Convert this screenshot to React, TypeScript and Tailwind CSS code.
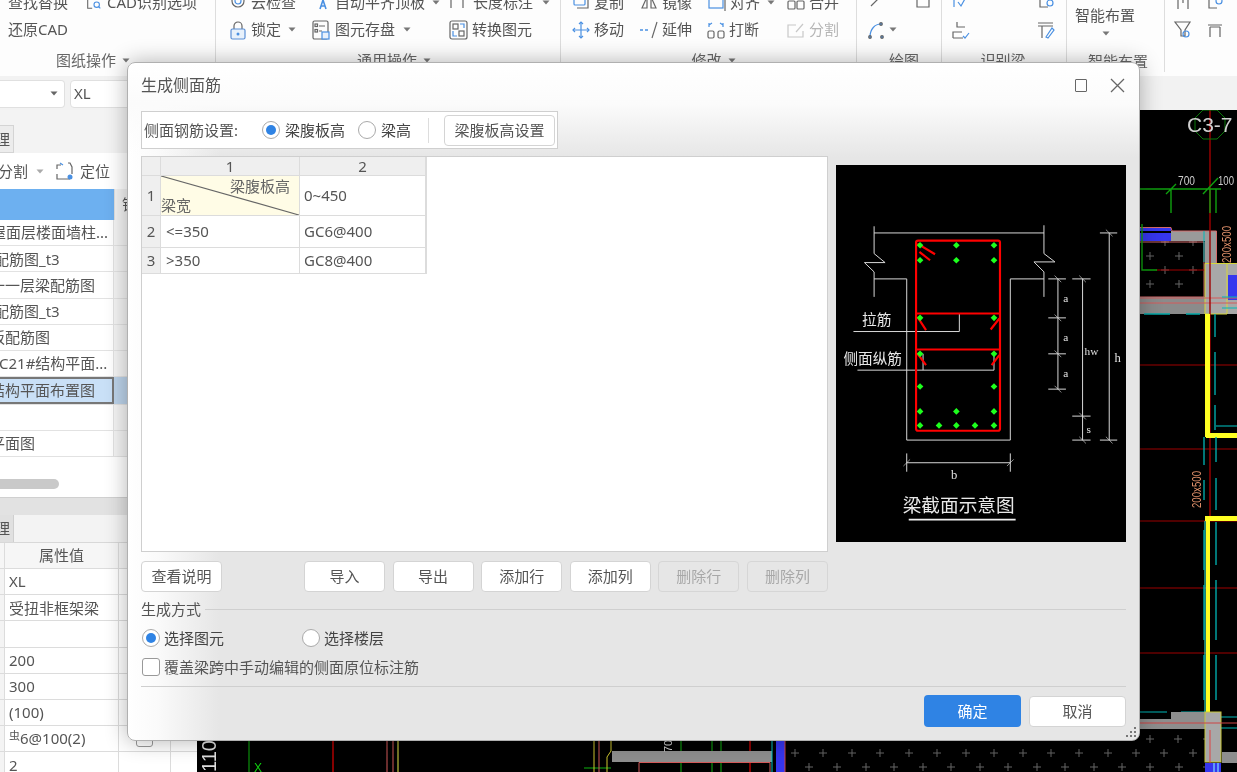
import React from "react";

const B = "#4a90e2";
const G = "#666";

function Ic({ children, w = 20 }: { children: React.ReactNode; w?: number }) {
  return (
    <svg width={w} height={20} viewBox="0 0 20 20" fill="none" stroke={G} strokeWidth={1.2} className="shrink-0">
      {children}
    </svg>
  );
}

function Caret({ c = "#777" }: { c?: string }) {
  return (
    <svg width="8" height="5" viewBox="0 0 8 5" className="shrink-0">
      <path d="M0.5 0.5H7.5L4 4.5Z" fill={c} />
    </svg>
  );
}

const icons: Record<string, React.ReactNode> = {
  cad: (<><path d="M8 4H3v13h5" /><circle cx="13" cy="13" r="3" stroke={B} /><path d="M15 15l2 2" stroke={B} /></>),
  cloud: (<><circle cx="10" cy="9" r="6" /><circle cx="10" cy="9" r="3" stroke={B} /></>),
  align: (<><path d="M3 3h2M8 3h2" stroke={G} /><path d="M8 17l3-9 3 9M9 14h4" stroke={B} strokeWidth={1.6} /></>),
  len: (<><path d="M3 2v14M15 2v14M15 3l-2 4M15 3l2 4" /></>),
  copy: (<><rect x="3" y="3" width="11" height="10" rx="1" stroke={B} /><path d="M6 16h11V7" /></>),
  mirror: (<><path d="M3 16L8 5v11zM17 16L12 5v11z" /></>),
  alignR: (<><rect x="2" y="6" width="14" height="10" stroke={B} /><path d="M18 2v17" /></>),
  merge: (<><rect x="2" y="9" width="7" height="8" rx="1" /><rect x="11" y="9" width="7" height="8" rx="1" /><path d="M5 3h10" stroke={B} /></>),
  lock: (<><path d="M6 9V6a4 4 0 018 0v3" /><rect x="3" y="9" width="14" height="10" rx="1.5" stroke="#5b8fd6" fill="#e8f1fb" /><circle cx="10" cy="14" r="1.5" fill="#4a90e2" stroke="none" /></>),
  save: (<><rect x="2" y="1" width="15" height="18" rx="1.5" /><path d="M8 6h6M8 11h3" /><rect x="4" y="4" width="2.5" height="2.5" /><rect x="4" y="9.5" width="2.5" height="2.5" /><rect x="11" y="12" width="7" height="7" stroke={B} fill="#e8f1fb" /></>),
  conv: (<><rect x="2" y="1" width="17" height="18" rx="2" /><rect x="5" y="4" width="5" height="5" /><rect x="11" y="11" width="5" height="5" /><path d="M12 4h4v4M5 11v5h4" stroke={B} /></>),
  move: (<><path d="M10 2v16M2 10h16" stroke={B} /><path d="M8 4l2-2 2 2M8 16l2 2 2-2M4 8l-2 2 2 2M16 8l2 2-2 2" stroke={B} /></>),
  ext: (<><path d="M1 10h3M6 10h3" stroke={B} strokeWidth={1.6} /><path d="M18 2l-5 16" /></>),
  brk: (<><rect x="2" y="11" width="6" height="7" rx="1.5" /><rect x="12" y="11" width="6" height="7" rx="1.5" /><path d="M3 3v4M17 3v4M6 3l-3 2M14 3l3 2" stroke={B} /></>),
  split: (<><path d="M10 5H2v12h15v-6" stroke="#c8c8c8" /><path d="M10 12l7-8" stroke="#c8c8c8" /></>),
};

function RI({ ic, t, w, caret, gray, gap = 3 }: { ic: string; t: string; w: number; caret?: boolean; gray?: boolean; gap?: number }) {
  return (
    <div className="flex items-center shrink-0" style={{ width: w, gap }}>
      <Ic>{icons[ic]}</Ic>
      <span className={gray ? "text-[15px] text-[#b5b5b5] whitespace-nowrap" : "text-[15px] text-[#555] whitespace-nowrap"}>{t}</span>
      {caret && <span className="ml-[4px]"><Caret /></span>}
    </div>
  );
}

function Label({ t, caret = true }: { t: string; caret?: boolean }) {
  return (
    <div className="h-[20px] flex items-center justify-center gap-[6px] text-[15px] text-[#666] whitespace-nowrap mt-[7px]">
      {t}
      {caret && <Caret />}
    </div>
  );
}

function Ribbon() {
  return (
    <div className="h-[76px] shrink-0 bg-[#fdfdfd] flex overflow-hidden">
      <div className="w-[216px] h-[72px] border-r border-[#ddd] shrink-0 flex flex-col">
        <div className="h-[28px] -mt-[12px] flex items-center pl-[8px] gap-[17px]">
          <span className="text-[15px] text-[#555] whitespace-nowrap">查找替换</span>
          <Ic w={18}>{icons.cad}</Ic>
          <span className="text-[15px] text-[#555] whitespace-nowrap -ml-[13px]">CAD识别选项</span>
        </div>
        <div className="h-[27px] flex items-center pl-[8px] text-[15px] text-[#555]">还原CAD</div>
        <div className="pl-[56px] flex"><Label t="图纸操作" /></div>
      </div>
      <div className="w-[345px] h-[72px] border-r border-[#ddd] shrink-0 flex flex-col pl-[12px]">
        <div className="h-[28px] -mt-[12px] flex items-center">
          <RI ic="cloud" t="云检查" w={84} />
          <RI ic="align" t="自动平齐顶板" w={136} caret />
          <RI ic="len" t="长度标注" w={110} caret gap={5} />
        </div>
        <div className="h-[27px] flex items-center">
          <RI ic="lock" t="锁定" w={83} caret />
          <RI ic="save" t="图元存盘" w={137} caret gap={4} />
          <RI ic="conv" t="转换图元" w={100} gap={4} />
        </div>
        <Label t="通用操作" />
      </div>
      <div className="w-[296px] h-[72px] border-r border-[#ddd] shrink-0 flex flex-col pl-[10px]">
        <div className="h-[28px] -mt-[12px] flex items-center">
          <RI ic="copy" t="复制" w={68} />
          <RI ic="mirror" t="镜像" w={68} />
          <RI ic="alignR" t="对齐" w={79} caret />
          <RI ic="merge" t="合并" w={60} />
        </div>
        <div className="h-[27px] flex items-center">
          <RI ic="move" t="移动" w={68} />
          <RI ic="ext" t="延伸" w={67} />
          <RI ic="brk" t="打断" w={80} />
          <RI ic="split" t="分割" w={60} gray />
        </div>
        <Label t="修改" />
      </div>
      <div className="w-[85px] h-[72px] border-r border-[#ddd] shrink-0 flex flex-col pl-[10px]">
        <div className="h-[28px] -mt-[12px] flex items-center gap-[26px]">
          <Ic><path d="M4 14L15 3" stroke={G} /></Ic>
          <Ic><path d="M4 4v11h12V4" /></Ic>
        </div>
        <div className="h-[27px] flex items-center gap-[2px]">
          <Ic><path d="M3 17C3 9 8 4 14 4" stroke={B} /><circle cx="3" cy="17" r="1.3" fill={B} /><circle cx="14" cy="4" r="1.3" fill={B} /><circle cx="15" cy="17" r="1.3" fill={B} /></Ic>
          <Caret />
        </div>
        <Label t="绘图" caret={false} />
      </div>
      <div className="w-[125px] h-[72px] border-r border-[#ddd] shrink-0 flex flex-col pl-[8px] pr-[10px]">
        <div className="h-[28px] -mt-[12px] flex items-center justify-between">
          <Ic><path d="M4 3v12M8 10l3 4 5-9" stroke={B} /></Ic>
          <Ic><path d="M4 3v12h8" /><circle cx="14" cy="11" r="3" stroke={B} /></Ic>
        </div>
        <div className="h-[27px] flex items-center justify-between">
          <Ic><path d="M7 2v5h8M3 18h10M3 18v-6h9" stroke={G} /><path d="M13 16l2 2 4-5" stroke={B} /></Ic>
          <Ic><path d="M2 3h15M2 6h15M6 6v12" /><path d="M10 17l6-9 2 2-6 8z" stroke={B} /></Ic>
        </div>
        <Label t="识别梁" caret={false} />
      </div>
      <div className="w-[98px] h-[72px] border-r border-[#ddd] shrink-0 flex flex-col pl-[8px]">
        <div className="h-[5px]" />
        <div className="text-[15px] text-[#555] h-[20px] flex items-center whitespace-nowrap">智能布置</div>
        <div className="h-[16px] flex items-center pl-[27px]"><Caret /></div>
        <div className="h-[10px]" />
        <div className="text-[15px] text-[#666] h-[20px] flex items-center whitespace-nowrap pl-[13px]">智能布置</div>
      </div>
      <div className="flex-1 flex flex-col pl-[8px]">
        <div className="h-[28px] -mt-[12px] flex items-center gap-[12px]">
          <Ic><path d="M3 5h14M5 5v12M15 5v12M10 5v6" /></Ic>
          <Ic><path d="M4 4v12h8" /><circle cx="14" cy="9" r="3" stroke={B} /></Ic>
        </div>
        <div className="h-[27px] flex items-center gap-[12px]">
          <Ic><path d="M2 2h15l-5 8v6H8v-6z" /><circle cx="13" cy="14" r="3" stroke={B} /></Ic>
          <Ic><path d="M3 5h14M5 7h10M5 7v10M15 7v10" /></Ic>
        </div>
      </div>
    </div>
  );
}

const rows = [
  { t: "屋面层楼面墙柱...", cls: "-ml-[9px]" },
  { t: "配筋图_t3", cls: "-ml-[6px]" },
  { t: "一一层梁配筋图", cls: "-ml-[10px]" },
  { t: "配筋图_t3", cls: "-ml-[6px]" },
  { t: "板配筋图", cls: "-ml-[10px]" },
  { t: "C21#结构平面...", cls: "-ml-[1px]" },
  { t: "结构平面布置图", cls: "-ml-[10px]", sel: true },
  { t: "", cls: "" },
  { t: "平面图", cls: "-ml-[10px]" },
];

const props = ["XL", "受扭非框架梁", "", "200", "300", "(100)", "虫6@100(2)", "2"];

function LeftPanel() {
  return (
    <div className="w-[197px] shrink-0 bg-[#f3f3f3] flex flex-col text-[15px] text-[#555] overflow-hidden">
      <div className="h-[15px] shrink-0" />
      <div className="h-[28px] shrink-0 flex">
        <div className="w-[14px] bg-[#ececec] border border-l-0 border-[#d4d4d4] flex items-center overflow-hidden"><span className="-ml-[5px]">理</span></div>
      </div>
      <div className="h-[36px] shrink-0 bg-white flex items-center">
        <span className="-ml-[2px]">分割</span>
        <span className="ml-[8px]"><Caret c="#aaa" /></span>
        <span className="ml-[11px]">
          <Ic>
            <path d="M2 8V4h4M2 13v5h13M13 2h2l2 4v7" />
            <path d="M5 2l3 2" stroke={B} />
            <circle cx="15" cy="16" r="2.5" fill={B} stroke="none" />
          </Ic>
        </span>
        <span className="ml-[5px]">定位</span>
        <span className="ml-[14px]"><Ic><path d="M3 3h14M5 3v14h10" /></Ic></span>
      </div>
      <div className="h-[31px] shrink-0 flex bg-white">
        <div className="w-[114px] bg-[#6db0f0]" />
        <div className="flex-1 bg-[#f2f2f2] border-l border-[#ddd] flex items-center pl-[7px]">锁</div>
      </div>
      <div className="h-[237px] shrink-0 flex flex-col bg-white">
        {rows.map((r, i) => (
          <div key={i} className="flex-1 flex border-b border-[#e2e2e2]">
            <div className={r.sel ? "w-[114px] flex items-center overflow-hidden whitespace-nowrap bg-[#c9e0f7] border-2 border-l-0 border-[#777]" : "w-[114px] flex items-center overflow-hidden whitespace-nowrap border-r border-[#e2e2e2]"}>
              <span className={r.cls}>{r.t}</span>
            </div>
            <div className={r.sel ? "flex-1 bg-[#bcd3ea]" : "flex-1 bg-[#f4f4f4]"} />
          </div>
        ))}
      </div>
      <div className="h-[40px] shrink-0 bg-white flex flex-col justify-center pt-[14px]">
        <div className="h-[10px] w-[59px] rounded-r-[5px] bg-[#c9c9c9]" />
      </div>
      <div className="h-[18px] shrink-0 bg-[#e2e2e2] border-t border-[#d0d0d0]" />
      <div className="h-[28px] shrink-0 flex bg-[#f3f3f3] border-b border-[#d8d8d8]">
        <div className="w-[14px] bg-[#e0e0e0] border-r border-[#cfcfcf] flex items-center overflow-hidden"><span className="-ml-[5px]">理</span></div>
      </div>
      <div className="h-[26px] flex border-b border-[#dcdcdc] bg-[#f6f6f6] shrink-0">
        <div className="w-[5px] border-r border-[#dcdcdc]" />
        <div className="w-[114px] flex items-center justify-center border-r border-[#dcdcdc]">属性值</div>
      </div>
      {props.map((p, i) => (
        <div key={i} className="h-[26.2px] flex border-b border-[#dcdcdc] bg-white shrink-0">
          <div className="w-[5px] border-r border-[#dcdcdc] bg-[#f4f4f4]" />
          <div className="w-[114px] flex items-center pl-[4px] border-r border-[#dcdcdc] whitespace-nowrap">
            {i === 6 ? (<><span className="text-[11px] -mt-[5px]">虫</span><span>6@100(2)</span></>) : p}
          </div>
          <div className="w-[52px] border-r border-[#dcdcdc] flex items-center justify-center">
            {i === 6 && <span className="block w-[17px] h-[17px] rounded-[3px] border border-[#999] bg-white" />}
          </div>
        </div>
      ))}
    </div>
  );
}

const crossPts: [number, number][] = [];
for (const x of [1150, 1178, 1207]) crossPts.push([x, 739]);
for (const x of [795, 823, 852, 880, 909, 937, 966, 994, 1023, 1051, 1079, 1108, 1136, 1164, 1193]) crossPts.push([x, 753]);
for (const x of [809, 837, 866, 894, 923, 951, 980, 1008, 1037, 1065, 1094, 1122, 1150, 1179, 1207]) crossPts.push([x, 767]);
for (const p of [[1165, 242], [1193, 242], [1150, 256], [1179, 256], [1165, 270], [1193, 270], [1150, 284], [1179, 284]] as [number, number][]) crossPts.push(p);

function Canvas() {
  return (
    <div className="flex-1 bg-black overflow-hidden">
      <svg viewBox="197 110 1040 662" width="1040" height="662" className="block">
        {crossPts.map(([x, y], i) => (
          <path key={i} d={`M${x - 4} ${y}h8M${x} ${y - 4}v8`} stroke="#666" strokeWidth="1" />
        ))}
        {[365, 449, 521, 588, 653].map((y) => (
          <path key={y} d={`M197 ${y}H1237`} stroke="#a00000" strokeWidth="1" />
        ))}
        <rect x="1171" y="231" width="45" height="10" fill="#9a9a9a" />
        <rect x="1205" y="241" width="11" height="22" fill="#9a9a9a" />
        <rect x="1140" y="228" width="31" height="13" fill="#3636ee" />
        <path d="M1140 232H1171" stroke="#000" strokeWidth="2" />
        <path d="M1140 227.5H1171L1172 231H1216.5V263" stroke="#d46a6a" fill="none" />
        <path d="M1140 242H1204V297H1140" stroke="#d46a6a" fill="none" />
        <path d="M1156 270H1237" stroke="#a00000" strokeWidth="1" />
        <rect x="1140" y="297" width="65" height="17" fill="#8b8b8b" />
        <rect x="1205" y="263" width="32" height="51" fill="#a8a8a8" />
        <path d="M1205 314V263.5H1237M1205 314H1227V264" stroke="#d6d63a" fill="none" />
        <rect x="1228" y="275" width="9" height="25" fill="#3636ee" />
        <path d="M1140 298H1237M1140 303H1237" stroke="#d45a5a" strokeWidth="1" />
        <path d="M1210 110V521" stroke="#a00000" strokeWidth="1.4" />
        <path d="M1204 231V262M1222 297H1237M1222 308H1237" stroke="#00b8b8" strokeWidth="1" />
        <path d="M1215 314V337M1215 352V395M1215 405V430M1144 314H1170M1186 314H1200" stroke="#00a8a8" strokeWidth="1.4" />
        <rect x="1205" y="314" width="5" height="123" fill="#ffff22" />
        <rect x="1206" y="433" width="31" height="5" fill="#ffff22" />
        <path d="M1216 426H1237" stroke="#00c8c8" />
        <rect x="1205" y="516" width="32" height="5" fill="#ffff22" />
        <rect x="1206" y="521" width="4" height="191" fill="#ffff22" />
        <path d="M1205 521V712" stroke="#40ffe0" strokeWidth="1" />
        <path d="M1204 437V465M1204 480V500M1204 530V570M1204 585V640M1204 655V700M1216 437V462M1216 478V510M1216 522V565M1216 580V640M1216 655V700" stroke="#00a8a8" strokeWidth="1.4" />
        <path d="M1140 712H1167M1181 712H1205M1221 717H1237M1221 728H1237" stroke="#00b8b8" strokeWidth="1" />
        <rect x="1140" y="719" width="65" height="10" fill="#8e8e8e" />
        <rect x="1171" y="712" width="34" height="8" fill="#8e8e8e" />
        <rect x="1205" y="712" width="16" height="50" fill="#a8a8a8" stroke="#c8c83a" />
        <rect x="1222" y="752" width="15" height="11" fill="#8e8e8e" />
        <path d="M1140 723H1237" stroke="#c44" strokeWidth="1" />
        <path d="M1210 730V772" stroke="#d44" />
        <rect x="1205" y="763" width="16" height="9" fill="#3636ee" />
        <path d="M1214 763V772M1218 763V772" stroke="#8ff" />
        <path d="M1203 110L1217 110L1225 118L1225 131L1217 139L1203 139L1195 131L1195 118Z" stroke="#0a7a0a" fill="none" />
        <text x="1187" y="132" fill="#d0d0d0" fontSize="21" fontFamily="'Liberation Sans', sans-serif">C3-7</text>
        <path d="M1140 189H1221M1171 189V213M1210 189V213M1216 189V213M1203 194L1218 178M1166 194L1176 184" stroke="#0fa00f" strokeWidth="1.4" fill="none" />
        <path d="M1142 224V270H1157" stroke="#0fa00f" strokeWidth="1.4" fill="none" />
        <text x="1178" y="185" fill="#ccc" fontSize="13" fontFamily="'Liberation Sans',sans-serif" textLength="17" lengthAdjust="spacingAndGlyphs">700</text>
        <text x="1218" y="185" fill="#ccc" fontSize="13" fontFamily="'Liberation Sans',sans-serif" textLength="16" lengthAdjust="spacingAndGlyphs">100</text>
        <text transform="translate(1231 263) rotate(-90)" fill="#e0906a" fontSize="12" fontFamily="'Liberation Sans',sans-serif" textLength="37" lengthAdjust="spacingAndGlyphs">200x500</text>
        <text transform="translate(1201 508) rotate(-90)" fill="#e0906a" fontSize="12" fontFamily="'Liberation Sans',sans-serif" textLength="37" lengthAdjust="spacingAndGlyphs">200x500</text>
        <text transform="translate(216 772) rotate(-90)" fill="#ddd" fontSize="20" fontFamily="'Liberation Sans',sans-serif">110</text>
        <path d="M249 741V772M681 741V772M712 741V772M721 741V772M584 768H611" stroke="#0fb00f" strokeWidth="1" />
        <path d="M333 741V772M750 741V772" stroke="#c00000" strokeWidth="1.4" />
        <path d="M387 741V772M393 741V772" stroke="#d45a5a" />
        <path d="M398 741V772" stroke="#e8e84a" />
        <path d="M594 741V772M611 741V751L607 757V772" stroke="#d0c830" fill="none" />
        <path d="M599 741V772" stroke="#d45a5a" />
        <rect x="612" y="751" width="160" height="11" fill="#8e8e8e" />
        <path d="M639 772V762.5H770V772" stroke="#d45a5a" fill="none" />
        <path d="M772 741V772" stroke="#00c8c8" />
        <rect x="776" y="741" width="9" height="31" fill="#3636ee" />
        <path d="M785 741V772" stroke="#c44" />
        <text transform="translate(672 752) rotate(-90)" fill="#ccc" fontSize="11" fontFamily="'Liberation Sans',sans-serif">70</text>
        <text x="254" y="772" fill="#0fd00f" fontSize="12" fontFamily="'Liberation Sans',sans-serif">X</text>
      </svg>
    </div>
  );
}

function Radio({ on }: { on?: boolean }) {
  return (
    <span className="w-[18px] h-[18px] rounded-full border-[1.5px] border-[#aaa] bg-white flex items-center justify-center shrink-0">
      {on && <span className="w-[10px] h-[10px] rounded-full bg-[#2f83e4]" />}
    </span>
  );
}

function Btn({ t, cls = "w-[81px]", off }: { t: string; cls?: string; off?: boolean }) {
  return (
    <div className={`${cls} ${off ? "bg-[#e6e6e6] text-[#a8a8a8] border-[#d6d6d6]" : "bg-white text-[#555] border-[#d4d4d4]"} h-[31px] rounded-[4px] border flex items-center justify-center text-[15px] shrink-0`}>
      {t}
    </div>
  );
}

function Diagram() {
  const w = "#d8d8d8";
  const dots: [number, number][] = [
    [270, 255], [379, 255], [492, 255], [270, 300], [379, 300], [492, 300], [270, 473], [492, 473], [270, 581], [492, 581],
    [270, 679], [492, 679], [270, 754], [379, 754], [492, 754], [270, 796], [327, 796], [379, 796], [435, 796], [492, 796],
  ];
  const ticks: [number, number, number][] = [
    [655, 708, 356], [655, 708, 473], [655, 708, 581], [655, 708, 687], [727, 782, 356], [727, 782, 768], [727, 782, 840], [810, 862, 218], [810, 862, 840],
  ];
  const font = "'Noto Sans CJK SC', sans-serif";
  const serif = "'Liberation Serif', serif";
  return (
    <svg viewBox="18 14 870 1132" width="290" height="377" className="block bg-black shrink-0 mt-[9px]">
      <g stroke={w} strokeWidth="3" fill="none">
        <path d="M132 218H642" />
        <path d="M132 198V280L165 307H103L132 335V410" />
        <path d="M642 195V280L675 305H612L642 335V410" />
        <path d="M132 356H230V840H541V356H642" />
        <path d="M70 514H388V460M82 630H492V581M279 630V581" />
        <path d="M684 356V687M758 356V840M838 218V840M230 908H541M230 880V935M541 880V935" />
        {ticks.map(([a, b, y], i) => (
          <path key={i} d={`M${a} ${y}H${b}`} />
        ))}
        {ticks.map(([a, b, y], i) => {
          const x = a === 655 ? 684 : a === 727 ? 758 : 838;
          return <path key={"s" + i} d={`M${x - 10} ${y - 10}L${x + 10} ${y + 10}`} strokeWidth="2" />;
        })}
        <path d="M220 918L240 898M531 918L551 898" strokeWidth="2" />
      </g>
      <g stroke="#ff0000" strokeWidth="6.5" fill="none">
        <rect x="258" y="241" width="252" height="571" rx="6" />
        <path d="M258 460H510M258 568H510" />
        <path d="M262 250L315 282M268 275L300 300M262 470L288 510M508 475L482 508M262 580L288 615M508 585L485 615" />
      </g>
      {dots.map(([x, y], i) => (
        <path key={i} d={`M${x} ${y - 10}L${x + 10} ${y}L${x} ${y + 10}L${x - 10} ${y}Z`} fill="#1dff1d" />
      ))}
      <g fill="#e8e8e8" fontFamily={font}>
        <text x="96" y="494" fontSize="44">拉筋</text>
        <text x="40" y="612" fontSize="44">侧面纵筋</text>
        <text x="218" y="1056" fontSize="56">梁截面示意图</text>
      </g>
      <g fill="#e0e0e0" fontFamily={serif} fontSize="34">
        <text x="700" y="426">a</text>
        <text x="700" y="543">a</text>
        <text x="700" y="650">a</text>
        <text x="764" y="586">hw</text>
        <text x="770" y="818">s</text>
        <text x="854" y="606" fontSize="38">h</text>
        <text x="363" y="958" fontSize="38">b</text>
      </g>
      <path d="M236 1079H557" stroke="#f0f0f0" strokeWidth="5" />
    </svg>
  );
}

function Dialog() {
  return (
    <div className="absolute left-[127px] top-[62px] w-[1013px] h-[679px] rounded-[8px] border border-[#b0b0b0] shadow-[0_0_22px_rgba(0,0,0,0.3)] flex flex-col px-[13px] overflow-hidden text-[15px] text-[#555] bg-[linear-gradient(to_bottom,#ffffff_0%,#fbfbfb_6%,rgba(245,245,245,0)_14%),linear-gradient(to_right,#ffffff_0%,#fafafa_3%,#e6e6e6_9%,#e6e6e6_100%)]">
      <div className="h-[48px] shrink-0 flex items-center justify-between pb-[4px]">
        <span className="text-[16px] text-[#555]">生成侧面筋</span>
        <div className="flex items-center gap-[23px] pr-[1px]">
          <span className="w-[12px] h-[13px] border-[1.5px] border-[#666] rounded-[1px]" />
          <svg width="15" height="15" viewBox="0 0 15 15" stroke="#666" strokeWidth="1.3"><path d="M1 1L14 14M14 1L1 14" /></svg>
        </div>
      </div>

      <div className="h-[38px] w-[417px] shrink-0 bg-white border-[1.5px] border-[#cfcfcf] flex items-center pl-[2px]">
        <span className="w-[118px] whitespace-nowrap">侧面钢筋设置:</span>
        <Radio on />
        <span className="ml-[5px] w-[73px] text-[#444] whitespace-nowrap">梁腹板高</span>
        <Radio />
        <span className="ml-[5px] w-[47px] text-[#444] whitespace-nowrap">梁高</span>
        <span className="w-px h-[25px] bg-[#ddd] mr-[15px]" />
        <Btn t="梁腹板高设置" cls="w-[111px]" />
      </div>

      <div className="h-[396px] mt-[7px] shrink-0 flex justify-between">
        <div className="w-[687px] bg-white border border-[#cfcfcf]">
          <div className="w-[285px] bg-[#dcdcdc] pb-px pr-px grid grid-cols-[18px_138px_125px] grid-rows-[18px_39px_31px_25px] gap-px text-[#555]">
            <div className="bg-[#efefef]" />
            <div className="bg-[#efefef] flex items-center justify-center leading-none">1</div>
            <div className="bg-[#efefef] flex items-center justify-center leading-none">2</div>
            <div className="bg-[#efefef] flex items-center justify-center">1</div>
            <div className="bg-[#fffce6] relative overflow-hidden text-[#666]">
              <svg className="absolute inset-0" width="138" height="39"><path d="M0 0L138 39" stroke="#666" strokeWidth="1.2" /></svg>
              <span className="absolute right-[9px] top-[0px] leading-[20px]">梁腹板高</span>
              <span className="absolute left-[0px] bottom-[0px] leading-[20px]">梁宽</span>
            </div>
            <div className="bg-white flex items-center pl-[4px]">0~450</div>
            <div className="bg-[#efefef] flex items-center justify-center">2</div>
            <div className="bg-white flex items-center pl-[5px]">&lt;=350</div>
            <div className="bg-white flex items-center pl-[4px]">GC6@400</div>
            <div className="bg-[#efefef] flex items-center justify-center">3</div>
            <div className="bg-white flex items-center pl-[5px]">&gt;350</div>
            <div className="bg-white flex items-center pl-[4px]">GC8@400</div>
          </div>
        </div>
        <Diagram />
      </div>

      <div className="mt-[9px] h-[32px] shrink-0 flex">
        <Btn t="查看说明" />
        <div className="ml-[82px] flex gap-[7.6px]">
          <Btn t="导入" />
          <Btn t="导出" />
          <Btn t="添加行" />
          <Btn t="添加列" />
          <Btn t="删除行" off />
          <Btn t="删除列" off />
        </div>
      </div>

      <div className="mt-[5px] h-[22px] shrink-0 flex items-center gap-[4px]">
        <span>生成方式</span>
        <span className="flex-1 h-px bg-[#cfcfcf]" />
      </div>

      <div className="mt-[6px] h-[24px] shrink-0 flex items-center pl-[1px]">
        <Radio on />
        <span className="ml-[4px] w-[138px] text-[#444]">选择图元</span>
        <Radio />
        <span className="ml-[4px] text-[#444]">选择楼层</span>
      </div>

      <div className="mt-[5px] h-[24px] shrink-0 flex items-center pl-[1px]">
        <span className="w-[18px] h-[18px] rounded-[3px] border-[1.5px] border-[#999] bg-white shrink-0" />
        <span className="ml-[4px] text-[#555] whitespace-nowrap">覆盖梁跨中手动编辑的侧面原位标注筋</span>
      </div>

      <div className="mt-[7px] h-px shrink-0 bg-[#cfcfcf]" />

      <div className="mt-[8px] flex justify-end gap-[8px] items-center h-[32px] shrink-0">
        <div className="w-[97px] h-[32px] rounded-[4px] bg-[#2f83e4] text-white flex items-center justify-center">确定</div>
        <div className="w-[97px] h-[31px] rounded-[4px] bg-white border border-[#d4d4d4] flex items-center justify-center">取消</div>
      </div>

      <svg className="absolute right-[2px] bottom-[2px]" width="11" height="11" viewBox="0 0 11 11" fill="#777">
        <rect x="8" y="0" width="2" height="2" />
        <rect x="4" y="4" width="2" height="2" />
        <rect x="8" y="4" width="2" height="2" />
        <rect x="0" y="8" width="2" height="2" />
        <rect x="4" y="8" width="2" height="2" />
        <rect x="8" y="8" width="2" height="2" />
      </svg>
    </div>
  );
}

export default function App() {
  return (
    <div className="relative w-[1237px] h-[772px] overflow-hidden bg-white font-['Noto_Sans','Noto_Sans_CJK_SC',sans-serif] blur-[0.4px]">
      <Ribbon />
      <div className="h-[34px] bg-[#f2f2f2] flex items-center gap-[5px] pt-[1px] text-[15px] text-[#555]">
        <div className="w-[65px] h-[28px] bg-white rounded-r-[4px] border border-l-0 border-[#e0e0e0] flex items-center justify-end pr-[6px]"><Caret c="#666" /></div>
        <div className="w-[130px] h-[28px] bg-white rounded-[4px] border border-[#e0e0e0] flex items-center pl-[3px]">XL</div>
      </div>
      <div className="flex h-[662px]">
        <LeftPanel />
        <Canvas />
      </div>
      <Dialog />
    </div>
  );
}
